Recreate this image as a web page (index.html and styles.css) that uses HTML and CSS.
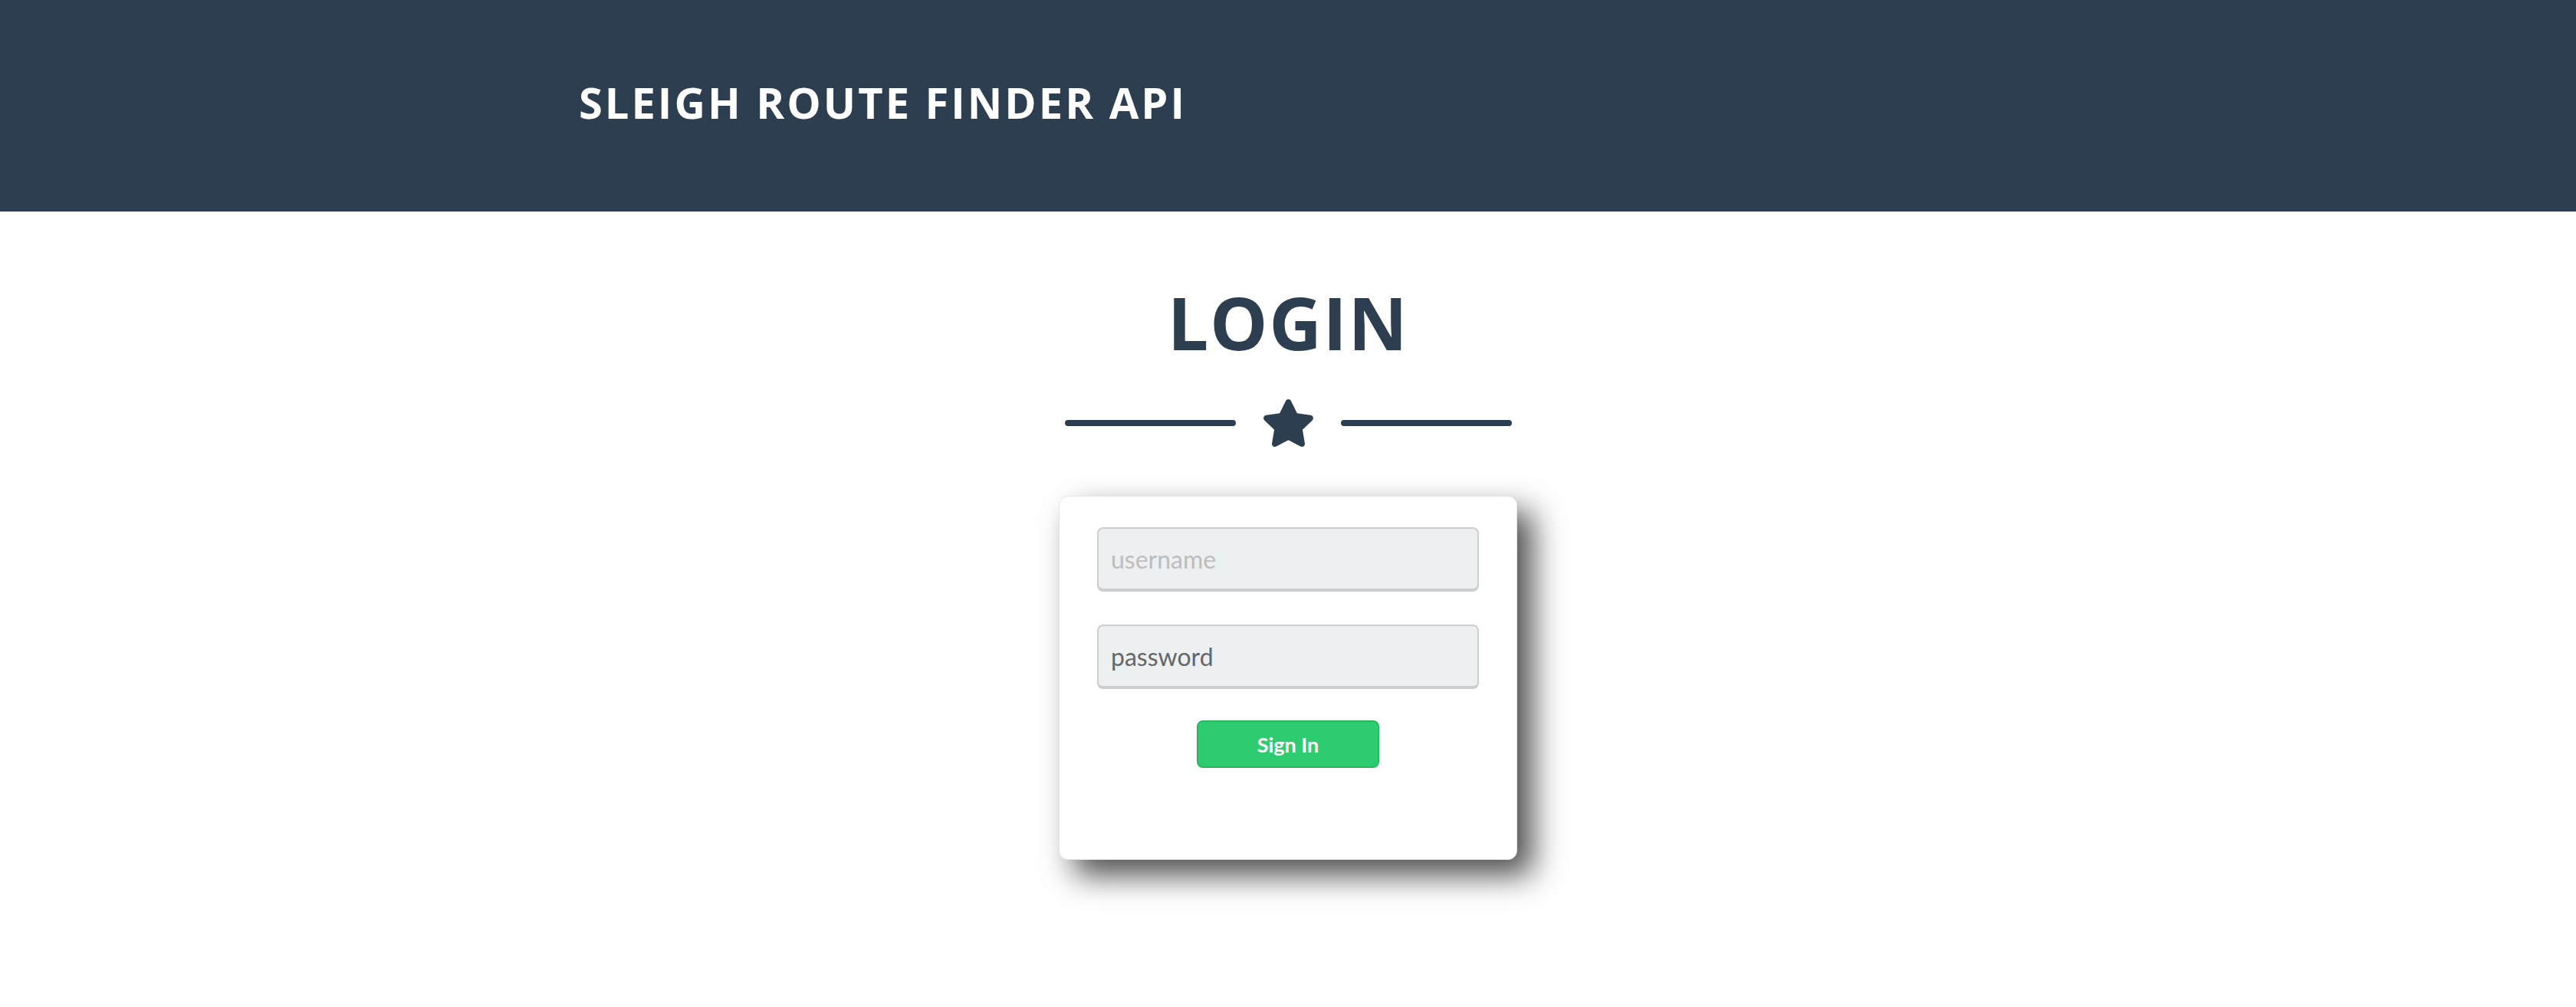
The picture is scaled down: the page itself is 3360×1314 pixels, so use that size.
FILE: index.html
```html
<!DOCTYPE html>
<html lang="en">
<head>
    <meta charset="UTF-8">
    <title>Sleigh Route Finder API - Login</title>
    <link rel="stylesheet" href="styles.css">
</head>
<body>

    <header class="topbar">
        <div class="topbar-inner">
            <a class="brand" href="#">Sleigh Route Finder API</a>
        </div>
    </header>

    <section class="login">
        <h1 class="login-title">Login</h1>

        <div class="divider">
            <span class="divider-line"></span>
            <svg class="divider-star" viewBox="12 0 552 512" width="67" height="62">
                <path d="M259.3 17.8L194 150.2 47.9 171.5c-26.2 3.8-36.7 36.1-17.7 54.6l105.7 103-25 145.5c-4.5 26.3 23.2 46 46.4 33.7L288 439.6l130.7 68.7c23.2 12.2 50.9-7.4 46.4-33.7l-25-145.5 105.7-103c19-18.5 8.5-50.8-17.7-54.6L382 150.2 316.7 17.8c-11.7-23.6-45.6-23.9-57.4 0z" fill="#2c3e50"/>
            </svg>
            <span class="divider-line"></span>
        </div>

        <form class="login-card" onsubmit="return false;">
            <input class="login-input" type="text" placeholder="username">
            <input class="login-input" type="text" value="password">
            <button class="signin-button" type="submit">Sign In</button>
        </form>
    </section>

</body>
</html>
```

FILE: styles.css
```css
* {
    margin: 0;
    padding: 0;
    box-sizing: border-box;
}

html,
body {
    min-height: 100%;
}

body {
    font-family: Lato, "Open Sans", sans-serif;
    background-color: #fff;
    color: #2c3e50;
}

.topbar {
    background-color: #2c3e50;
    height: 276px;
}

    .topbar-inner {
        width: 1850px;
        height: 100%;
        margin: 0 auto;
        display: flex;
        align-items: center;
        padding-bottom: 10px;
    }

    .brand {
        font-family: "Open Sans", sans-serif;
        font-weight: 700;
        font-size: 56px;
        line-height: 1;
        letter-spacing: 3px;
        text-transform: uppercase;
        text-decoration: none;
        color: #fff;
    }

.login {
    display: flex;
    flex-direction: column;
    align-items: center;
    padding-top: 97px;
    padding-bottom: 190px;
}

.login-title {
    font-family: "Open Sans", sans-serif;
    font-weight: 700;
    font-size: 95px;
    line-height: 1;
    letter-spacing: 1.5px;
    text-transform: uppercase;
    color: #2c3e50;
}

.divider {
    display: flex;
    align-items: center;
    gap: 35px;
    margin-top: 53px;
}

    .divider-line {
        display: block;
        width: 223px;
        height: 8px;
        border-radius: 4px;
        background-color: #2c3e50;
    }

    .divider-star {
        display: block;
    }

.login-card {
    display: flex;
    flex-direction: column;
    align-items: center;
    width: 598px;
    margin-top: 64px;
    padding: 40px 49px 119px;
    background-color: #fff;
    border: 1px solid #e6e6e6;
    border-radius: 12px;
    box-shadow: 20px 20px 40px rgba(0, 0, 0, 0.7);
}

.login-input {
    width: 100%;
    height: 84px;
    margin-bottom: 43px;
    padding: 0 16px;
    font-family: Lato, sans-serif;
    font-size: 32px;
    color: #666;
    background-color: #ecf0f1;
    border: 2px solid #cdcdcd;
    border-bottom-width: 4px;
    border-radius: 8px;
    outline: none;
}

    .login-input::placeholder {
        color: #bdbdbd;
    }

.signin-button {
    width: 238px;
    height: 62px;
    margin-top: -2px;
    font-family: Lato, sans-serif;
    font-weight: 700;
    font-size: 27px;
    color: #fff;
    background-color: #2ecc71;
    border: 2px solid #27b862;
    border-radius: 8px;
    cursor: pointer;
}
```
